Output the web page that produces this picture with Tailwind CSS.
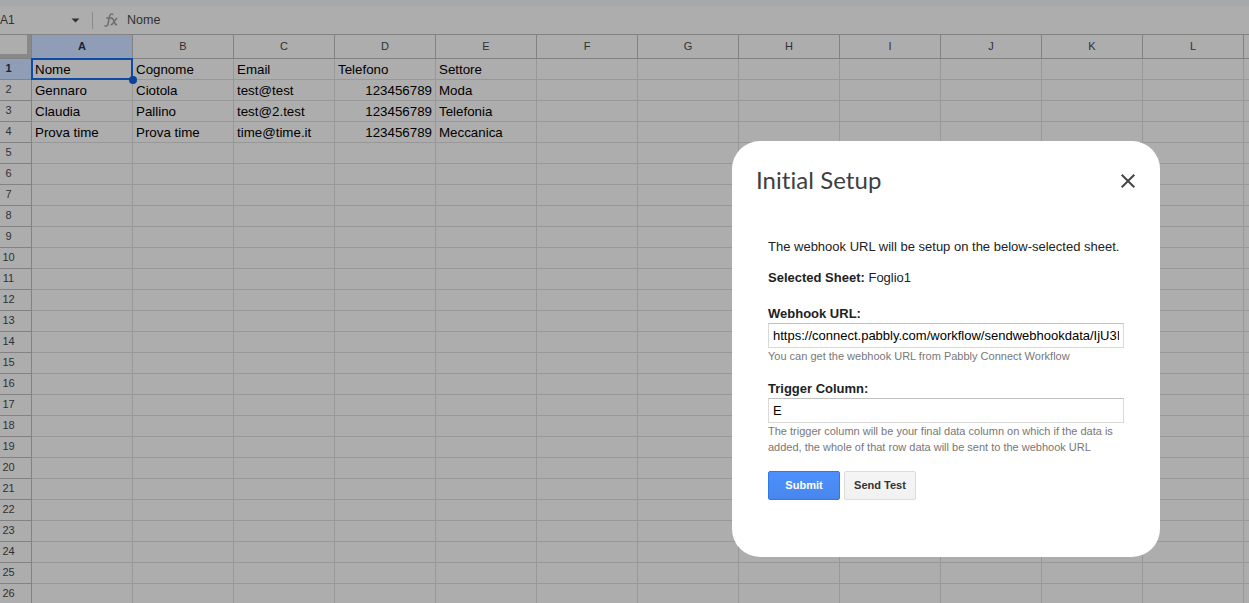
<!DOCTYPE html>
<html lang="it">
<head>
  <meta charset="UTF-8" />
  <meta name="viewport" content="width=device-width, initial-scale=1.0" />
  <title>Initial Setup</title>
  <script src="https://cdn.jsdelivr.net/npm/@tailwindcss/browser@4"></script>
</head>
<body class="relative w-[1249px] h-[603px] overflow-hidden bg-[#adadad] font-['Liberation_Sans',Arial,sans-serif] text-black">

  <!-- Formula bar -->
  <div class="h-[6px] bg-[#a6a9ac]"></div>
  <div class="flex h-[28px] items-center text-[12px] text-[#303133]">
    <span class="w-[71px]">A1</span>
    <svg class="w-[9px] h-[5px] shrink-0" viewBox="0 0 9 5"><path d="M0.5 0.5h8L4.5 4.5z" fill="#303133" /></svg>
    <span class="ml-[12px] h-[17px] w-px bg-[#8a8a8a]"></span>
    <svg class="ml-[11px] mr-[9px] w-[14px] h-[14px] shrink-0" viewBox="0 0 14 14" fill="none" stroke="#6c6d6e" stroke-width="1.5">
      <path d="M9.2 1.6C7.6 0.4 6 1 5.5 3.4L4 11c-.4 2-1.8 2.5-3.5 1.6M2.2 5h6" />
      <path d="M7.2 5.6h1.5l2.9 6h1.6M13.4 5.6h-1L7.9 11.6H6.6" />
    </svg>
    <span class="text-[12.5px]">Nome</span>
  </div>

  <!-- Sheet -->
  <table class="table-fixed w-[1249px] border-separate border-spacing-0">
    <thead>
      <tr id="head" class="h-[25px] text-[11px] text-[#303133]"></tr>
    </thead>
    <tbody id="rows" class="text-[13.33px]"></tbody>
  </table>

  <!-- Dialog -->
  <div class="absolute left-[732px] top-[141px] w-[428px] h-[416px] rounded-[28px] bg-white text-[#222]">
    <div class="flex items-center justify-between pl-6 pr-[25px] pt-6 h-[56px]">
      <h1 class="-mt-[2px] font-[Lato,sans-serif] font-normal text-[24px] leading-8 tracking-[0.05px] [font-variant-ligatures:none] text-[#3c4043]">Initial Setup</h1>
      <svg class="w-[14px] h-[14px]" viewBox="0 0 14 14" fill="none" stroke="#444746" stroke-width="2"><path d="M0.7 0.7l12.6 12.6M13.3 0.7L0.7 13.3" /></svg>
    </div>
    <form class="pl-9 pr-9 pt-[41px] text-[13px] leading-[18px]" onsubmit="return false">
      <p>The webhook URL will be setup on the below-selected sheet.</p>
      <p class="mt-[13px]"><b>Selected Sheet:</b> Foglio1</p>
      <label class="block mt-[18px] font-bold" for="url">Webhook URL:</label>
      <input id="url" class="block w-full h-[25px] px-1 border border-[#d9d9d9] border-t-[#c0c0c0] text-[13px] text-black" value="https://connect.pabbly.com/workflow/sendwebhookdata/IjU3I" />
      <p class="text-[11px] leading-4 text-[#777]">You can get the webhook URL from Pabbly Connect Workflow</p>
      <label class="block mt-4 font-bold" for="col">Trigger Column:</label>
      <input id="col" class="block w-full h-[25px] px-1 border border-[#d9d9d9] border-t-[#c0c0c0] text-[13px] text-black" value="E" />
      <p class="text-[11px] leading-4 text-[#777]">The trigger column will be your final data column on which if the data is<br>added, the whole of that row data will be sent to the webhook URL</p>
      <div class="flex gap-1 mt-4 text-[11px] font-bold">
        <button class="w-[72px] h-[29px] pb-[2px] rounded-[2px] border border-[#3079ed] bg-linear-to-b from-[#4d90fe] to-[#4787ed] text-white">Submit</button>
        <button class="w-[72px] h-[29px] pb-[2px] rounded-[2px] border border-[#dcdcdc] bg-linear-to-b from-[#f5f5f5] to-[#f1f1f1] text-[#333]">Send Test</button>
      </div>
    </form>
  </div>

  <script>
    const data = [
      ['Nome', 'Cognome', 'Email', 'Telefono', 'Settore'],
      ['Gennaro', 'Ciotola', 'test@test', '123456789', 'Moda'],
      ['Claudia', 'Pallino', 'test@2.test', '123456789', 'Telefonia'],
      ['Prova time', 'Prova time', 'time@time.it', '123456789', 'Meccanica']
    ];
    const cols = 'ABCDEFGHIJKL'.split('');

    // column letters, first one is selected
    document.getElementById('head').innerHTML =
      '<th class="w-[32px] p-0 border-y border-r border-y-[#828282] border-r-[#828282] bg-[#adadad]"><div class="h-[23px] border-r-4 border-b-4 border-[#888]"></div></th>' +
      cols.map((c, i) => i === 0
        ? '<th class="w-[101px] p-0 border-y border-r border-[#828282] bg-[#8f9db7] font-bold text-[#1b2430]">A</th>'
        : `<th class="w-[101px] p-0 border-y border-r border-[#828282] font-normal">${c}</th>`
      ).join('') +
      '<th class="w-[5px] p-0 border-y border-[#828282]"></th>';

    let html = '';
    for (let r = 0; r < 26; r++) {
      html += '<tr class="h-[21px]">';
      html += r === 0
        ? '<th class="p-0 pr-[14px] border-b border-r border-[#828282] bg-[#8f9db7] text-[11px] leading-[18px] pb-[2px] font-bold text-[#1b2430]">1</th>'
        : `<th class="p-0 pr-[14px] border-b border-r border-[#828282] text-[11px] leading-[18px] pb-[2px] font-normal text-[#303133]">${r + 1}</th>`;
      for (let c = 0; c < cols.length; c++) {
        const text = (data[r] || [])[c] || '';
        const mark = r === 0 && c === 0
          ? '<div class="absolute -left-px -top-px w-[102px] h-[22px] border-2 border-[#0f4ba4]"></div><div class="absolute z-10 left-[97px] top-[17px] w-[8px] h-[8px] rounded-full bg-[#0b4196]"></div>'
          : '';
        const align = r > 0 && c === 3 ? 'text-right' : 'text-left';
        html += `<td class="relative p-0 px-[3px] pt-[2px] border-b border-r border-[#989898] leading-[18px] whitespace-nowrap ${align}">${text}${mark}</td>`;
      }
      html += '<td class="p-0 border-b border-[#989898]"></td></tr>';
    }
    document.getElementById('rows').innerHTML = html;
  </script>
</body>
</html>
